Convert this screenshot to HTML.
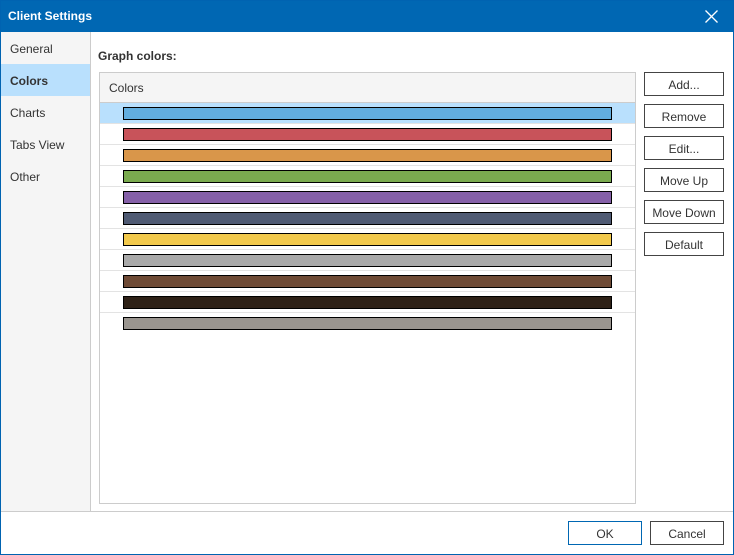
<!DOCTYPE html>
<html><head><style>
*{margin:0;padding:0;box-sizing:border-box}
body{width:734px;height:555px;font-family:"Liberation Sans",sans-serif;font-size:12px;color:#333;background:#fff;position:relative;overflow:hidden}
.frame{position:absolute;left:0;top:0;width:734px;height:555px;border:1px solid #0063b1;z-index:5;pointer-events:none}
.title{position:absolute;left:0;top:0;width:734px;height:32px;background:#0067b3;color:#fff;font-weight:bold;font-size:12px;padding:9px 0 0 8px}
.x{position:absolute;right:16px;top:10px;width:13px;height:13px}
.side{position:absolute;left:1px;top:32px;width:90px;height:480px;background:#f5f5f5;border-right:1px solid #ccc}
.side div{height:32px;padding:10px 0 0 9px}
.side .sel{background:#b9e0fd;font-weight:bold}
.lbl{position:absolute;left:98px;top:49px;font-weight:bold}
.list{position:absolute;left:99px;top:72px;width:537px;height:432px;border:1px solid #ccc}
.hdr{height:30px;background:#f5f5f5;border-bottom:1px solid #ccc;padding:8px 0 0 9px}
.row{height:21px;border-bottom:1px solid #e3e3e3;position:relative}
.row.s{background:#b9e0fd}
.row i{position:absolute;left:23px;top:4px;width:489px;height:13px;border:1px solid #000}
.btn{position:absolute;left:644px;width:80px;height:24px;border:1px solid #444;text-align:center;padding-top:5px;background:#fff}
.foot{position:absolute;left:1px;top:511px;width:732px;border-top:1px solid #ccc}
</style></head><body>
<div class="frame"></div>
<div class="title">Client Settings
<svg class="x" viewBox="0 0 13 13"><path d="M0.5 0.5L12.5 12.5M12.5 0.5L0.5 12.5" stroke="#fff" stroke-width="1.3"/></svg></div>
<div class="side"><div>General</div><div class="sel">Colors</div><div>Charts</div><div>Tabs View</div><div>Other</div></div>
<div class="lbl">Graph colors:</div>
<div class="list"><div class="hdr">Colors</div>
<div class="row s"><i style="background:#62aedf"></i></div>
<div class="row"><i style="background:#c8535a"></i></div>
<div class="row"><i style="background:#d9964a"></i></div>
<div class="row"><i style="background:#7aab4f"></i></div>
<div class="row"><i style="background:#8560a8"></i></div>
<div class="row"><i style="background:#4f5a73"></i></div>
<div class="row"><i style="background:#f2c94c"></i></div>
<div class="row"><i style="background:#a9a9a9"></i></div>
<div class="row"><i style="background:#6e4a35"></i></div>
<div class="row"><i style="background:#2e2117"></i></div>
<div class="row" style="border-bottom:none"><i style="background:#9a958f"></i></div>
</div>
<div class="btn" style="top:72px">Add...</div>
<div class="btn" style="top:104px">Remove</div>
<div class="btn" style="top:136px">Edit...</div>
<div class="btn" style="top:168px">Move Up</div>
<div class="btn" style="top:200px">Move Down</div>
<div class="btn" style="top:232px">Default</div>
<div class="foot"></div>
<div class="btn" style="left:568px;top:521px;width:74px;border-color:#0067b3">OK</div>
<div class="btn" style="left:650px;top:521px;width:74px">Cancel</div>
</body></html>
